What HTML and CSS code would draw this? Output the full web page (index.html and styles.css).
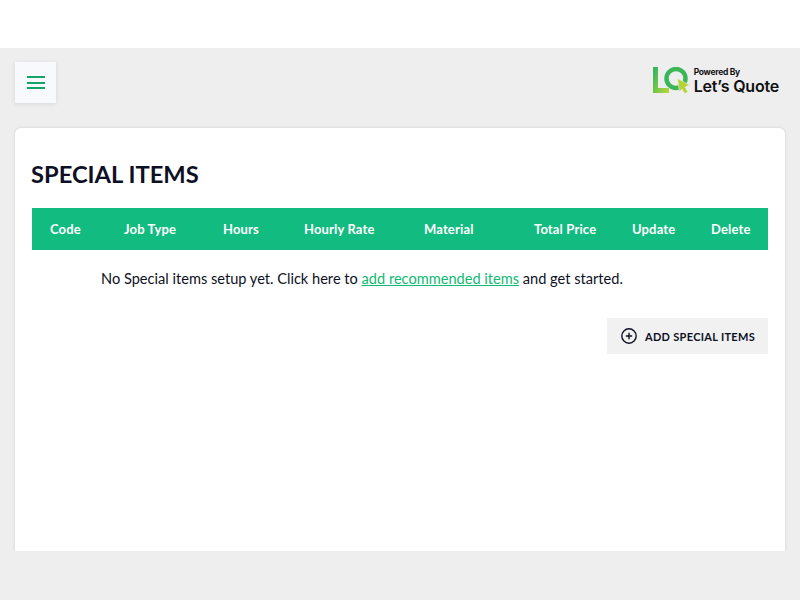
FILE: index.html
```html
<!DOCTYPE html>
<html lang="en">
<head>
    <meta charset="UTF-8">
    <meta name="viewport" content="width=device-width, initial-scale=1.0">
    <title>Special Items</title>
    <link rel="stylesheet" href="styles.css">
</head>
<body>
    <div class="top-strip"></div>
    <main class="page">
        <header class="toolbar">
            <button class="menu-btn" aria-label="Menu">
                <span></span><span></span><span></span>
            </button>
            <div class="brand">
                <svg class="brand-mark" width="37" height="27" viewBox="0 0 37 27">
                    <defs>
                        <linearGradient id="lqGrad" x1="0" y1="0" x2="1" y2="1">
                            <stop offset="0" stop-color="#35b65a"/>
                            <stop offset="1" stop-color="#b5d63a"/>
                        </linearGradient>
                    </defs>
                    <polyline points="2.5,0 2.5,23.5 16,23.5" fill="none" stroke="url(#lqGrad)" stroke-width="5"/>
                    <circle cx="23" cy="11.5" r="9.5" fill="none" stroke="#3bb75a" stroke-width="4.5"/>
                    <polygon points="24.5,11.5 36.5,18 32,20 35,25 31.5,26.5 29,22 26.5,25" fill="#b5d334" stroke="#eeeeee" stroke-width="0.6"/>
                </svg>
                <div class="brand-text">
                    <span class="brand-small">Powered By</span>
                    <span class="brand-name">Let’s Quote</span>
                </div>
            </div>
        </header>
        <section class="card">
            <h1>SPECIAL ITEMS</h1>
            <table>
                <thead>
                    <tr>
                        <th>Code</th>
                        <th>Job Type</th>
                        <th>Hours</th>
                        <th>Hourly Rate</th>
                        <th>Material</th>
                        <th>Total Price</th>
                        <th>Update</th>
                        <th>Delete</th>
                    </tr>
                </thead>
            </table>
            <p class="empty">No Special items setup yet. Click here to <a href="#">add recommended items</a> and get started.</p>
            <div class="actions">
                <button class="add-btn">
                    <svg width="16" height="16" viewBox="0 0 16 16" fill="none" stroke="#0d1024" stroke-width="1.4">
                        <circle cx="8" cy="8" r="7.2"/>
                        <path d="M8 4.8v6.4M4.8 8h6.4"/>
                    </svg>
                    ADD SPECIAL ITEMS
                </button>
            </div>
        </section>
    </main>
</body>
</html>
```

FILE: styles.css
```css
html, body {
    height: 100%;
}
body {
    margin: 0;
    background-color: #eeeeee;
    font-family: Lato, Arial, sans-serif;
    color: #0d1024;
    overflow: hidden;
}
.top-strip {
    height: 48px;
    background: #fff;
}
.page {
    padding: 14px 15px 0;
}
.toolbar {
    display: flex;
    justify-content: space-between;
    align-items: flex-start;
    height: 66px;
}
.menu-btn {
    width: 41px;
    height: 41px;
    padding: 0;
    border: none;
    background: #f8f9fc;
    box-shadow: 0 1px 4px rgba(0, 0, 0, 0.1);
    display: flex;
    flex-direction: column;
    align-items: center;
    justify-content: center;
    gap: 3.5px;
}
.menu-btn span {
    display: block;
    width: 18px;
    height: 2px;
    background: #14a468;
}
.brand {
    display: flex;
    align-items: center;
    gap: 4px;
    margin: 5px 6px 0 0;
}
.brand-text {
    display: flex;
    flex-direction: column;
    font-family: Inter, Arial, sans-serif;
    color: #111;
}
.brand-small {
    font-size: 8.5px;
    font-weight: 700;
    line-height: 11px;
    letter-spacing: -0.3px;
}
.brand-name {
    font-size: 16px;
    font-weight: 600;
    line-height: 16px;
    letter-spacing: -0.2px;
}
.card {
    height: 423px;
    box-sizing: border-box;
    padding: 31px 17px 0 16px;
    background: #fff;
    border-radius: 6px 6px 0 0;
    box-shadow: 0 0 3px rgba(0, 0, 0, 0.15);
    clip-path: inset(-4px -4px 0 -4px);
}
h1 {
    margin: 0 0 19px 0;
    font-size: 23.7px;
    line-height: 30px;
    font-weight: 700;
}
table {
    width: 736px;
    margin-left: 1px;
    border-collapse: collapse;
    table-layout: fixed;
}
th {
    box-sizing: border-box;
    height: 42px;
    padding: 0 0 0 18px;
    background: #12bb80;
    color: #fff;
    font-size: 13px;
    font-weight: 700;
    text-align: left;
    letter-spacing: 0.15px;
}
th:nth-child(1) { width: 74px; }
th:nth-child(2) { width: 99px; }
th:nth-child(3) { width: 81px; }
th:nth-child(4) { width: 120px; }
th:nth-child(5) { width: 110px; }
th:nth-child(6) { width: 98px; }
th:nth-child(7) { width: 79px; }
.empty {
    margin: 19px 0 0 70px;
    font-size: 14.6px;
    line-height: 20px;
}
.empty a {
    color: #0fba72;
}
.actions {
    display: flex;
    justify-content: flex-end;
    margin-top: 29px;
}
.add-btn {
    display: flex;
    align-items: center;
    gap: 8px;
    width: 161px;
    height: 36px;
    padding: 0 0 0 14px;
    border: none;
    background: #f1f1f2;
    color: #0d1024;
    font-family: inherit;
    font-size: 11px;
    font-weight: 700;
    letter-spacing: 0.3px;
}
```
